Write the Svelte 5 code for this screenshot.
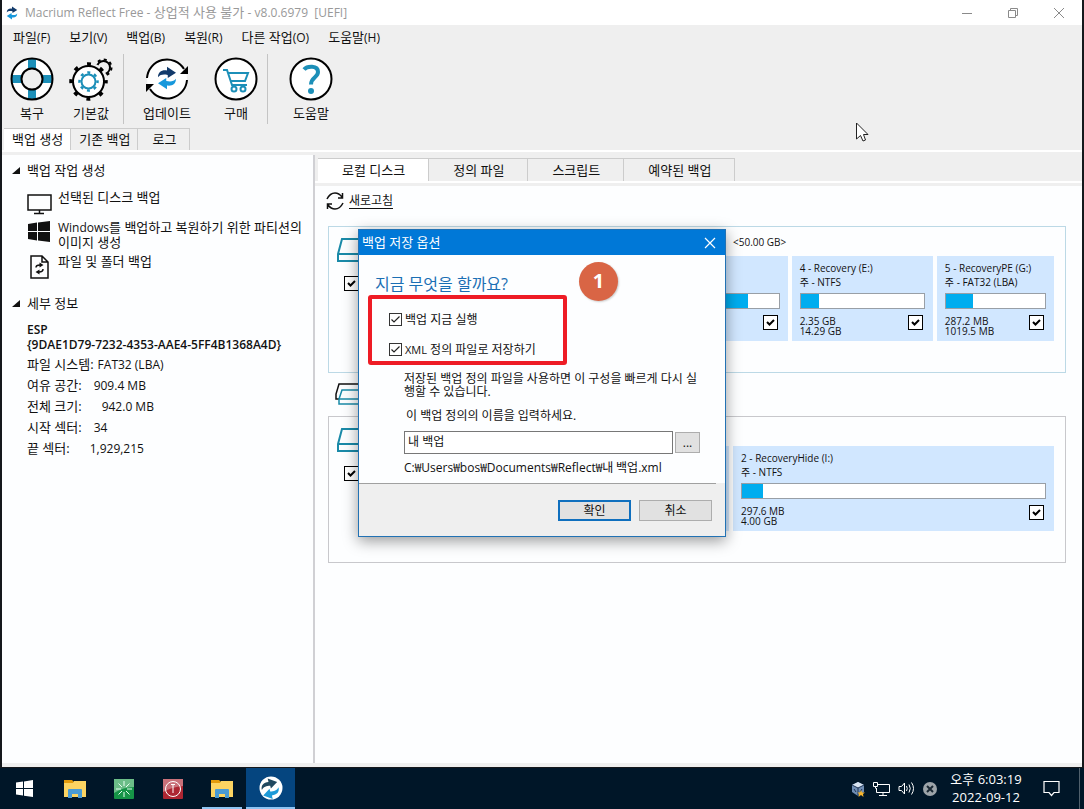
<script>
  const menus = ['파일|(F)', '보기|(V)', '백업|(B)', '복원|(R)', '다른 작업|(O)', '도움말|(H)'].map((m) => m.split('|'));
  const sideTabs = ['백업 생성', '기존 백업', '로그'];
  const mainTabs = ['로컬 디스크', '정의 파일', '스크립트', '예약된 백업'];
  const details = [
    { label: '파일 시스템:', value: 'FAT32 (LBA)', gap: 4 },
    { label: '여유 공간:', value: '909.4 MB', gap: 12 },
    { label: '전체 크기:', value: '942.0 MB', gap: 20 },
    { label: '시작 섹터:', value: '34', gap: 12 },
    { label: '끝 섹터:', value: '1,929,215', gap: 20 }
  ];
  const disks = [
    {
      size: '<50.00 GB>',
      selected: true,
      parts: [
        { grow: 383, fill: 92 },
        { name: '4 - Recovery (E:)', fs: 'NTFS', used: '2.35 GB', total: '14.29 GB', grow: 125, fill: 15 },
        { name: '5 - RecoveryPE (G:)', fs: 'FAT32 (LBA)', used: '287.2 MB', total: '1019.5 MB', grow: 101, fill: 27 }
      ]
    },
    {
      size: '',
      selected: false,
      parts: [
        { grow: 325, fill: 10 },
        { name: '2 - RecoveryHide (I:)', fs: 'NTFS', used: '297.6 MB', total: '4.00 GB', grow: 305, fill: 7 }
      ]
    }
  ];
  let fileName = $state('내 백업');
</script>

{#snippet swirl(dark, light)}
  <path d="M4 15C4 8 9 5 16 6V1L28 9L17 16V12C12 11 7 11 4 15Z" fill={dark} />
  <path d="M28 17C28 24 23 27 16 26V31L4 23L15 16V20C20 21 25 21 28 17Z" fill={light} />
{/snippet}

{#snippet drive()}
  <svg class="drive" viewBox="0 0 46 26" fill="none" stroke="#1a8aa8" stroke-width="2">
    <path d="M1 17L5 2H41L45 17V24H1ZM1 17H45" />
  </svg>
{/snippet}

{#snippet folder()}
  <svg width="22" height="20" viewBox="0 0 22 20">
    <path d="M0 1H8L10 3V8H0Z" fill="#e39b0c" />
    <path d="M0 4H9L10 2H22V18H0Z" fill="#fcd462" />
    <path d="M4 19V11Q4 10 5 10H17Q18 10 18 11V19H14V15H8V19Z" fill="#4a9bd4" />
  </svg>
{/snippet}

<div class="desktop">
  <div class="window">
    <header class="titlebar">
      <svg width="14" height="14" viewBox="0 0 32 32">{@render swirl('#123a6b', '#1798dc')}</svg>
      <h1><span class="latin">Macrium Reflect Free -</span> 상업적 사용 불가 <span class="latin">- v8.0.6979 &nbsp;[UEFI]</span></h1>
      <div class="controls">
        <button aria-label="최소화"><svg width="12" height="12" viewBox="0 0 12 12"><path d="M1 6.500H11" /></svg></button>
        <button aria-label="이전 크기로"><svg width="12" height="12" viewBox="0 0 12 12"><path d="M1.500 3.500H8.500V10.500H1.500ZM3.500 3V1.500H10.500V8.500H9" /></svg></button>
        <button aria-label="닫기"><svg width="12" height="12" viewBox="0 0 12 12"><path d="M1 1L11 11M11 1L1 11" /></svg></button>
      </div>
    </header>

    <nav class="menubar">
      {#each menus as [text, key]}
        <button>{text}<span class="latin">{key}</span></button>
      {/each}
    </nav>

    <div class="toolbar">
      <div class="group">
        <button class="tool">
          <svg width="44" height="44" viewBox="0 0 44 44" fill="none">
            <circle cx="22" cy="22" r="15.500" stroke="#fff" stroke-width="9" />
            <path d="M22 2V12M22 32V42M2 22H12M32 22H42" stroke="#1c8fb8" stroke-width="8" />
            <circle cx="22" cy="22" r="20.500" stroke="#000" stroke-width="2" />
            <circle cx="22" cy="22" r="10.500" stroke="#000" stroke-width="2" />
          </svg>
          복구
        </button>
        <button class="tool">
          <svg width="44" height="44" viewBox="0 0 44 44" fill="none">
            <circle cx="34.500" cy="10.500" r="6.500" stroke="#000" stroke-width="2" />
            <circle cx="34.500" cy="10.500" r="8" stroke="#000" stroke-width="2" stroke-dasharray="3 3.280" />
            <circle cx="19.500" cy="24.500" r="19" fill="#efefef" />
            <circle cx="19.500" cy="24.500" r="15.500" fill="#fff" stroke="#000" stroke-width="2" />
            <circle cx="19.500" cy="24.500" r="17.500" stroke="#000" stroke-width="3.500" stroke-dasharray="4 9.740" stroke-dashoffset="2" />
            <circle cx="19.500" cy="24.500" r="7" stroke="#1c8fb8" stroke-width="2" />
            <circle cx="19.500" cy="24.500" r="9" stroke="#1c8fb8" stroke-width="2.500" stroke-dasharray="3 4.070" stroke-dashoffset="1.500" />
          </svg>
          기본값
        </button>
      </div>
      <div class="group wide">
        <button class="tool">
          <svg width="44" height="44" viewBox="0 0 44 44" fill="none">
            <circle cx="22" cy="22" r="20" fill="#fff" />
            <path d="M2 21A20 20 0 0 1 39 12M42 23A20 20 0 0 1 5 32" stroke="#000" stroke-width="2" />
            <path d="M43 9V17H35ZM1 35V27H9Z" fill="#000" />
            <g transform="translate(10 9) scale(.75)">{@render swirl('#123a6b', '#1798dc')}</g>
          </svg>
          업데이트
        </button>
        <button class="tool">
          <svg width="44" height="44" viewBox="0 0 44 44" fill="none">
            <circle cx="22" cy="22" r="20.500" fill="#fff" stroke="#000" stroke-width="2" />
            <g stroke="#1c8fb8" stroke-width="2">
              <path d="M9 13H13L18 28H33M14 16H34L31 24H17" />
              <circle cx="20" cy="32" r="2.500" /><circle cx="29" cy="32" r="2.500" />
            </g>
          </svg>
          구매
        </button>
      </div>
      <div class="group last">
        <button class="tool">
          <svg width="44" height="44" viewBox="0 0 44 44" fill="none">
            <circle cx="22" cy="22" r="20.500" fill="#fff" stroke="#000" stroke-width="2" />
            <path d="M15 12.500C18 9 29 8 29 15C29 20.500 22 20 22 27.500" stroke="#1c8fb8" stroke-width="4" />
            <circle cx="22" cy="34" r="3" fill="#1c8fb8" />
          </svg>
          도움말
        </button>
      </div>
    </div>

    <div class="tabs side" role="tablist">
      {#each sideTabs as tab, i}
        <button role="tab" aria-selected={i === 0}>{tab}</button>
      {/each}
    </div>

    <div class="body">
      <aside>
        <h2><i class="caret"></i>백업 작업 생성</h2>
        <ul class="tasks">
          <li>
            <svg width="26" height="26" viewBox="0 0 26 26" fill="none" stroke="#111" stroke-width="1.500">
              <path d="M1 5H24V20H1ZM12.500 20V23M7 23.500H17" />
            </svg>
            <a href="#disk">선택된 디스크 백업</a>
          </li>
          <li>
            <svg width="26" height="26" viewBox="0 0 26 26" fill="#111">
              <path d="M1 4L10 2.500V11H1ZM11 2.500L23 1V11H11ZM1 12H10V20.500L1 19ZM11 12H23V22L11 20.500Z" />
            </svg>
            <a href="#windows"><span class="latin">Windows</span>를 백업하고 복원하기 위한 파티션의 이미지 생성</a>
          </li>
          <li>
            <svg width="26" height="26" viewBox="0 0 26 26" fill="none" stroke="#111" stroke-width="1.500">
              <path d="M4 2H15L21 8V24H4ZM15 2V8H21" />
              <path d="M9 13.500Q9 11 13 11M16 15Q16 18 12 18" />
              <path d="M12.500 8.500L16.500 11L12.500 13.500ZM12.500 15.500L8.500 18L12.500 20.500Z" fill="#111" stroke="none" />
            </svg>
            <a href="#files">파일 및 폴더 백업</a>
          </li>
        </ul>
        <h2><i class="caret"></i>세부 정보</h2>
        <div class="details">
          <p class="id">ESP<br />{'{9DAE1D79-7232-4353-AAE4-5FF4B1368A4D}'}</p>
          <dl>
            {#each details as row}
              <div style:gap="{row.gap}px"><dt>{row.label}</dt><dd class="latin">{row.value}</dd></div>
            {/each}
          </dl>
        </div>
      </aside>

      <main>
        <div class="tabs main-tabs" role="tablist">
          {#each mainTabs as tab, i}
            <button role="tab" aria-selected={i === 0}>{tab}</button>
          {/each}
        </div>
        <div class="content">
          <button class="refresh">
            <svg width="18" height="20" viewBox="0 0 18 20" fill="none" stroke="#111" stroke-width="1.500">
              <path d="M1 8Q4 2 9 2Q13 2 16 6M17 12Q14 18 9 18Q5 18 2 14M16.500 2V7H12M1.500 18V13H6" />
            </svg>
            <span>새로고침</span>
          </button>

          {#each disks as disk, d}
            {#if d === 1}
              <svg class="multi" width="44" height="24" viewBox="0 0 44 24" fill="none" stroke-width="1.500">
                <path d="M2 17V12L5 2H34L38 12V17Z" stroke="#111" />
                <path d="M5 17L8 8H38L42 17V22H5ZM5 17H42" stroke="#1a8aa8" fill="#fdfeff" />
              </svg>
            {/if}
            <section class="disk" class:selected={disk.selected}>
              <div class="device">
                {@render drive()}
                <input class="tick" type="checkbox" checked aria-label="디스크 {d + 1}" />
              </div>
              <div class="volumes">
                <div class="size">{disk.size}</div>
                <div class="parts">
                  {#each disk.parts as part, p}
                    <article class="part" style:flex-grow={part.grow}>
                      <div class="name">{part.name ?? ''}</div>
                      <div class="name">{#if part.fs}<span class="ko">주</span> - {part.fs}{/if}</div>
                      <div class="bar"><div style:width="{part.fill}%"></div></div>
                      <div class="usage">
                        <div>{part.used ?? ''}<br />{part.total ?? ''}</div>
                        <input class="tick" type="checkbox" checked aria-label="파티션 {p + 1}" />
                      </div>
                    </article>
                  {/each}
                </div>
              </div>
            </section>
          {/each}
        </div>
      </main>
    </div>
  </div>

  <footer class="taskbar">
    <button class="app start" aria-label="시작">
      <svg width="17" height="17" viewBox="0 0 17 17" fill="#fff"><path d="M0 2.500L7 1.500V8H0ZM8 1.400L17 0V8H8ZM0 9H7V15.500L0 14.500ZM8 9H17V17L8 15.700Z" /></svg>
    </button>
    <button class="app" aria-label="탐색기">{@render folder()}</button>
    <button class="app" aria-label="도구">
      <svg width="20" height="20" viewBox="0 0 20 20">
        <rect width="20" height="20" rx="1" fill="#169447" /><path d="M0 0H20V8Q9 8 0 14Z" fill="#6cbd88" />
        <path d="M10 2V7M10 13V18M2 10H7M13 10H18M4.500 4.500L8 8M12 12L15.500 15.500M15.500 4.500L12 8M8 12L4.500 15.500" stroke="#e6fff0" />
      </svg>
    </button>
    <button class="app" aria-label="전원">
      <svg width="20" height="20" viewBox="0 0 20 20" fill="none">
        <rect width="20" height="20" rx="1" fill="#ad2632" /><path d="M0 0H20V7Q9 8 0 13Z" fill="#c9717a" />
        <circle cx="10" cy="10" r="7.500" stroke="#fff" /><path d="M10 5V14M8 5.500H12" stroke="#fff" />
      </svg>
    </button>
    <button class="app open" aria-label="폴더 창">{@render folder()}</button>
    <button class="app active" aria-label="Macrium Reflect">
      <svg width="24" height="24" viewBox="0 0 24 24"><circle cx="12" cy="12" r="11.500" fill="#fff" /><g transform="translate(0 1.500) scale(.7) rotate(-14 16 16)">{@render swirl('#20485f', '#1d9ad8')}</g></svg>
    </button>

    <div class="tray">
      <svg width="14" height="16" viewBox="0 0 14 16">
        <path d="M7 1L13 4V11L7 15L1 11V4Z" fill="#6f8db4" /><path d="M7 1L13 4L7 7L1 4Z" fill="#d8e4f2" /><path d="M7 7V15M1 4L7 7L13 4M3 8L5 11M9 11L11 8" stroke="#1d3557" fill="none" />
        <path d="M10 9L11 11.500H14L12 13L12.500 16L10 14L7.500 16L8 13L6.500 11.500H9Z" fill="#f7b52c" />
      </svg>
      <svg width="17" height="15" viewBox="0 0 17 15" fill="none" stroke="#fff"><path d="M5 3.500H16.500V11.500H3.500V7M10 11.500V14M6 14.500H14M.500 1.500H4.500V5.500H.500ZM2.500 5.500V7.500" /></svg>
      <svg width="17" height="15" viewBox="0 0 17 15" fill="none" stroke="#fff"><path d="M1 5.500H3.500L6.500 2V13L3.500 9.500H1ZM8.500 5Q10 7.500 8.500 10M11 3.500Q13.500 7.500 11 11.500M13.500 1.500Q17.500 7.500 13.500 13.500" /></svg>
      <svg width="14" height="14" viewBox="0 0 14 14"><circle cx="7" cy="7" r="7" fill="#9da4a9" /><path d="M4 4L10 10M10 4L4 10" stroke="#1a2833" stroke-width="2" /></svg>
    </div>
    <div class="clock"><span class="ko">오후</span> 6:03:19<br />2022-09-12</div>
    <button class="notify" aria-label="알림">
      <svg width="17" height="17" viewBox="0 0 17 17" fill="none" stroke="#fff" stroke-width="1.200"><path d="M1 1.500H16V12.500H11L8.500 15.500L6 12.500H1Z" /></svg>
    </button>
  </footer>

  <div class="dialog" role="dialog" aria-labelledby="dialog-title">
    <header>
      <h2 id="dialog-title">백업 저장 옵션</h2>
      <button aria-label="대화 상자 닫기"><svg width="12" height="12" viewBox="0 0 12 12" stroke="#fff" stroke-width="1.200"><path d="M1 1L11 11M11 1L1 11" /></svg></button>
    </header>
    <div class="form">
      <h3>지금 무엇을 할까요?</h3>
      <label class="option"><input type="checkbox" checked />백업 지금 실행</label>
      <label class="option"><input type="checkbox" checked /><span><span class="small">XML</span> 정의 파일로 저장하기</span></label>
      <p>저장된 백업 정의 파일을 사용하면 이 구성을 빠르게 다시 실행할 수 있습니다.</p>
      <label class="prompt" for="definition">이 백업 정의의 이름을 입력하세요.</label>
      <div class="field">
        <input id="definition" type="text" bind:value={fileName} />
        <button>...</button>
      </div>
      <output for="definition">C:₩Users₩bos₩Documents₩Reflect₩<span class="ko">내 백업</span>.xml</output>
    </div>
    <div class="actions">
      <button class="primary">확인</button>
      <button>취소</button>
    </div>
    <div class="highlight"></div>
    <div class="step">1</div>
  </div>

  <svg class="pointer" width="13" height="20" viewBox="0 0 13 20"><path d="M.500 1V17L4.500 13.500L7 19L9.500 18L7.500 12.500H12Z" fill="#fff" stroke="#222" /></svg>
</div>

<style>
  :global(body) {
    margin: 0;
    background: #001628;
  }
  .desktop {
    position: relative;
    display: flex;
    flex-direction: column;
    min-height: 100vh;
    overflow: hidden;
    font-family: 'Open Sans', 'Noto Sans CJK KR', sans-serif;
    font-size: 13px;
    line-height: 15px;
    color: #111;
    background: #15181c;
  }
  * {
    box-sizing: border-box;
  }
  button {
    font: inherit;
    color: inherit;
    background: none;
    border: 0;
    padding: 0;
    white-space: nowrap;
  }
  h1, h2, h3, p, ul, dl, dd {
    margin: 0;
    padding: 0;
    font-size: 13px;
    font-weight: 400;
  }
  svg {
    display: block;
    flex: none;
  }
  .latin,
  dd.latin {
    font-size: 12px;
  }
  .window {
    flex: 1;
    display: flex;
    flex-direction: column;
    margin: 0 2px 1px;
    padding-bottom: 4px;
    background: #efefef;
  }
  .titlebar {
    display: flex;
    align-items: center;
    height: 25px;
    padding-left: 3px;
    gap: 6px;
    background: #fff;
    color: #999;
  }
  .controls {
    display: flex;
    margin-left: auto;
  }
  .controls button {
    display: grid;
    place-items: center;
    width: 46px;
    height: 24px;
  }
  .controls svg {
    fill: none;
    stroke: #8a8a8a;
  }
  .menubar {
    display: flex;
    gap: 19px;
    height: 24px;
    padding-left: 11px;
  }
  .toolbar {
    display: flex;
    height: 79px;
    padding-top: 5px;
  }
  .group {
    display: flex;
    height: 70px;
    gap: 7px;
    padding: 0 6px 0 4px;
    border-right: 1px solid #c4c4c4;
  }
  .group.wide {
    gap: 13px;
    padding: 0 3px 0 15px;
  }
  .group.last {
    border: 0;
    padding-left: 15px;
  }
  .tool {
    display: flex;
    flex-direction: column;
    align-items: center;
    gap: 5px;
    min-width: 52px;
    padding-top: 3px;
  }
  .wide .tool,
  .last .tool {
    min-width: 56px;
  }
  .tabs {
    display: flex;
  }
  .tabs button {
    border: 1px solid #ccc;
    border-width: 1px 1px 0 0;
  }
  .tabs button[aria-selected='true'] {
    background: #fff;
    border-left: 0;
  }
  .side {
    height: 24px;
    padding-left: 2px;
    border-bottom: 2px solid #fff;
  }
  .side button {
    padding: 0 7px 0 8px;
  }
  .side button:last-child {
    padding: 0 13px 0 14px;
  }
  .body {
    flex: 1;
    display: flex;
    padding-top: 3px;
  }
  aside {
    flex: none;
    width: 313px;
    padding: 8px 8px 0 10px;
    background: #fdfeff;
    border-right: 2px solid #d0d0d4;
  }
  h2 {
    display: flex;
    align-items: center;
    gap: 7px;
  }
  .caret {
    width: 8px;
    height: 7px;
    background: #111;
    clip-path: polygon(100% 0, 100% 100%, 0 100%);
  }
  .tasks {
    display: flex;
    flex-direction: column;
    gap: 4px;
    margin: 12px 0 16px 15px;
    list-style: none;
  }
  .tasks li {
    display: flex;
    gap: 5px;
    min-height: 26px;
  }
  .tasks a {
    color: inherit;
    text-decoration: none;
  }
  .details {
    padding: 11px 0 0 15px;
  }
  .id {
    font-size: 12px;
    font-weight: 600;
    margin-bottom: 2px;
  }
  dl div {
    display: flex;
    line-height: 21px;
  }
  main {
    flex: 1;
    display: flex;
    flex-direction: column;
    min-width: 0;
  }
  .main-tabs {
    height: 25px;
    margin-top: 3px;
    padding-left: 3px;
    border-bottom: 2px solid #fff;
  }
  .main-tabs button {
    padding: 0 23px 0 24px;
  }
  .content {
    flex: 1;
    margin-top: 3px;
    padding: 5px 16px 0 13px;
    background: #fdfeff;
  }
  .refresh {
    display: flex;
    align-items: center;
    gap: 5px;
    margin-left: -2px;
    font-size: 12px;
  }
  .refresh span {
    border-bottom: 1px solid #111;
    line-height: 14px;
  }
  .disk {
    display: flex;
    height: 147px;
    margin-top: 15px;
    padding: 10px 11px 0 8px;
    border: 1px solid #c8c8cc;
  }
  .disk.selected {
    border-color: #bcd9e6;
  }
  .multi {
    margin: 9px 0 0 6px;
  }
  .multi + .disk {
    margin-top: 10px;
  }
  .device {
    display: flex;
    flex-direction: column;
    gap: 13px;
    flex: none;
    width: 51px;
  }
  .drive {
    width: 46px;
    height: 26px;
  }
  .device .tick {
    margin-left: 7px;
  }
  .volumes {
    flex: 1;
    font-size: 10px;
    line-height: 14px;
  }
  .size {
    height: 19px;
    padding-left: 345px;
    line-height: 10px;
  }
  .parts {
    display: flex;
    gap: 4px;
  }
  .part {
    flex: 1 1 0;
    min-width: 0;
    height: 85px;
    padding: 5px 8px 0;
    background: #d1e7ff;
  }
  .name {
    height: 14px;
  }
  .bar {
    height: 16px;
    margin: 4px 0 6px;
    border: 1px solid #999fa6;
    background: #fff;
  }
  .bar div {
    height: 100%;
    background: #00adef;
  }
  .usage {
    display: flex;
    justify-content: space-between;
    padding-right: 2px;
    line-height: 10px;
  }
  .usage > div {
    padding-top: 1px;
  }
  .tick,
  .option input {
    appearance: none;
    flex: none;
    width: 15px;
    height: 15px;
    margin: 0;
    border: 1px solid #000;
    background: #fff url("data:image/svg+xml,%3Csvg xmlns='http://www.w3.org/2000/svg' viewBox='0 0 13 13' fill='none' stroke='black' stroke-width='2'%3E%3Cpath d='M3 6l2.500 2.500L10 4'/%3E%3C/svg%3E") center / 100%;
  }
  .taskbar {
    display: flex;
    height: 41px;
    background: #001628;
    color: #fff;
  }
  .app {
    display: grid;
    place-items: center;
    width: 49px;
  }
  .start {
    width: 50px;
    padding-right: 2px;
  }
  .open {
    background: linear-gradient(#8ec4f2, #8ec4f2) center bottom / 40px 2px no-repeat;
  }
  .active {
    background: #05457f;
    border-bottom: 2px solid #8ec4f2;
  }
  .tray {
    display: flex;
    align-items: center;
    gap: 8px;
    margin-left: auto;
  }
  .clock {
    width: 98px;
    padding-top: 2px;
    line-height: 18px;
    text-align: center;
  }
  .notify {
    display: grid;
    place-items: center;
    width: 45px;
    margin-right: 4px;
    padding-right: 12px;
    border-right: 1px solid #50606c;
  }
  .dialog {
    position: absolute;
    left: 50%;
    top: 229px;
    width: 368px;
    transform: translateX(-50%);
    border: 1px solid #2272b4;
    background: #fdfeff;
    box-shadow: 0 4px 14px rgba(0, 0, 0, 0.4);
    font-size: 12px;
    line-height: 13px;
  }
  .dialog header {
    display: flex;
    align-items: center;
    justify-content: space-between;
    height: 25px;
    padding: 0 9px 0 3px;
    background: #0078d7;
    color: #fff;
  }
  .form {
    padding: 19px 25px 9px 16px;
  }
  h3 {
    margin-bottom: 16px;
    font-size: 16px;
    line-height: 20px;
    color: #1a6fb4;
  }
  .option {
    display: flex;
    align-items: center;
    gap: 3px;
    height: 18px;
    margin: 0 0 12px 14px;
  }
  .option input {
    width: 13px;
    height: 13px;
    border-color: #333;
    background-image: url("data:image/svg+xml,%3Csvg xmlns='http://www.w3.org/2000/svg' viewBox='0 0 11 11' fill='none' stroke='%23222' stroke-width='1.200'%3E%3Cpath d='M1.500 5.500L4 8L9.500 2.500'/%3E%3C/svg%3E");
  }
  .small {
    font-size: 11px;
  }
  .form p {
    margin: 14px 0 0 29px;
    font-size: 12px;
    word-break: break-all;
  }
  .prompt {
    display: block;
    margin: 11px 0 9px 31px;
  }
  .field {
    display: flex;
    align-items: center;
    gap: 2px;
    margin-left: 29px;
  }
  .field input {
    flex: 1;
    min-width: 0;
    height: 23px;
    padding: 0 3px 4px;
    border: 1px solid #777;
    background: #fff;
    color: inherit;
    font: inherit;
  }
  .field button {
    width: 25px;
    height: 21px;
    border: 1px solid #adadad;
    background: #e1e1e1;
  }
  output {
    display: block;
    margin: 6px 0 0 29px;
    white-space: nowrap;
  }
  .ko {
    font-family: 'Noto Sans CJK KR', sans-serif;
  }
  .actions {
    display: flex;
    justify-content: flex-end;
    gap: 8px;
    padding: 17px 13px 15px;
    background: linear-gradient(90deg, #a0a0a0, #a0a0a0) left top / calc(100% - 9px) 1px no-repeat #efefef;
  }
  .actions button {
    width: 73px;
    height: 21px;
    border: 1px solid #adadad;
    background: #e1e1e1;
  }
  .actions .primary {
    border: 2px solid #0f6fbe;
  }
  .highlight {
    position: absolute;
    left: 9px;
    top: 65px;
    width: 199px;
    height: 70px;
    border: 4px solid #ee1c25;
    border-radius: 3px;
    pointer-events: none;
  }
  .step {
    position: absolute;
    left: 220px;
    top: 32px;
    width: 39px;
    height: 39px;
    border-radius: 50%;
    background: #d96545;
    box-shadow: 1px 1px 2px #ccc;
    color: #fff;
    font: 700 20px/38px 'Open Sans', sans-serif;
    text-align: center;
  }
  .pointer {
    position: absolute;
    left: 856px;
    top: 122px;
  }
</style>
